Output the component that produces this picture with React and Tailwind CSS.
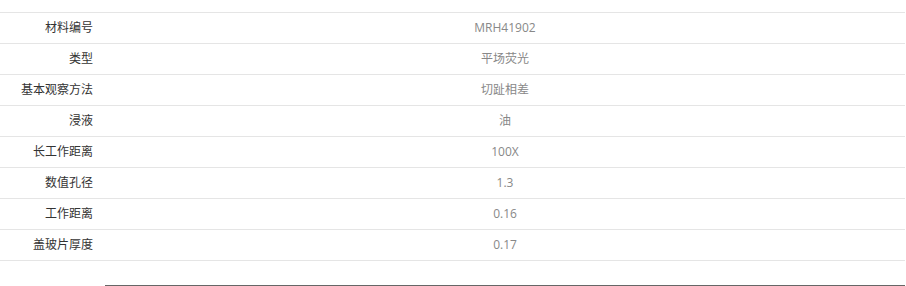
import React from "react";

const rows = [
  ["材料编号", "MRH41902"],
  ["类型", "平场荧光"],
  ["基本观察方法", "切趾相差"],
  ["浸液", "油"],
  ["长工作距离", "100X"],
  ["数值孔径", "1.3"],
  ["工作距离", "0.16"],
  ["盖玻片厚度", "0.17"],
];

export default function App() {
  return (
    <div
      className="w-[906px] h-[286px] bg-white overflow-hidden"
      style={{ fontFamily: '"Open Sans", "Noto Sans CJK SC", sans-serif' }}
    >
      <div className="w-[905px] pt-[12px]">
        <div className="border-b border-[#e5e5e5]">
          {rows.map(([k, v]) => (
            <div key={k} className="flex h-[31px] border-t border-[#e5e5e5] text-[12px] leading-[30px]">
              <div className="w-[105px] pr-[12px] text-right text-[#333333]">{k}</div>
              <div className="flex-1 text-center text-[#888888]">{v}</div>
            </div>
          ))}
        </div>
        <div className="ml-[105px] mt-[24px] w-[800px] h-[2px] bg-[#666666]" />
      </div>
    </div>
  );
}
